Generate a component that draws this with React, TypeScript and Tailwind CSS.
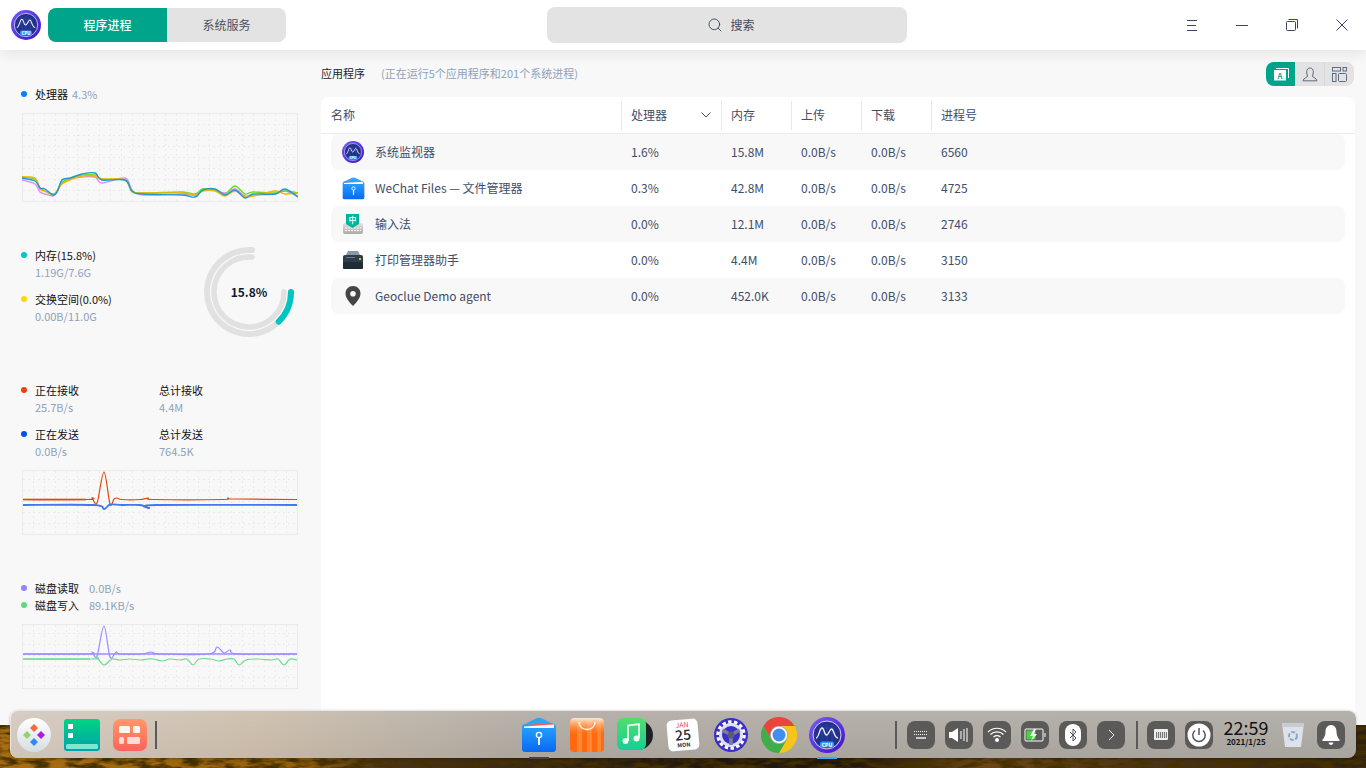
import { Search } from 'lucide-react';
import type { ReactNode } from 'react';

type Pt = [number, number];
type Line = { color: string; pts: Pt[]; width?: number };

const smooth = (pts: Pt[]) => {
  let d = `M${pts[0][0]} ${pts[0][1]}`;
  for (let i = 0; i < pts.length - 1; i++) {
    const p0 = pts[Math.max(i - 1, 0)];
    const p1 = pts[i];
    const p2 = pts[i + 1];
    const p3 = pts[Math.min(i + 2, pts.length - 1)];
    const c1x = p1[0] + (p2[0] - p0[0]) / 6;
    const c1y = p1[1] + (p2[1] - p0[1]) / 6;
    const c2x = p2[0] - (p3[0] - p1[0]) / 6;
    const c2y = p2[1] - (p3[1] - p1[1]) / 6;
    d += ` C${c1x} ${c1y} ${c2x} ${c2y} ${p2[0]} ${p2[1]}`;
  }
  return d;
};

const cpuX = [0, 13, 18, 23, 31, 35, 40, 48, 60, 73, 80, 103, 110, 121, 160, 173, 181, 193, 203, 213, 223, 231, 253, 263, 276];
const zip = (ys: number[]) => ys.map((y, i) => [cpuX[i], y] as Pt);

const cpuLines: Line[] = [
  { color: '#d98cf5', pts: zip([67, 71, 79, 81, 83, 79, 70, 66, 64, 64, 70, 65, 77, 82, 81, 82, 76, 77, 80, 76, 83, 82, 81, 78, 83]) },
  { color: '#72d920', pts: zip([64, 66, 75, 78, 81, 78, 69, 66, 62, 62, 66, 67, 78, 80, 79, 81, 76, 77, 81, 73, 81, 79, 80, 78, 80]) },
  { color: '#f5b400', pts: zip([64, 65, 76, 78, 82, 78, 71, 67, 63, 63, 66, 67, 79, 80, 80, 82, 78, 78, 83, 78, 84, 83, 78, 81, 80]) },
  { color: '#1a9bd8', pts: zip([65, 68, 75, 76, 82, 79, 67, 65, 61, 60, 67, 67, 78, 81, 82, 84, 77, 76, 82, 77, 85, 81, 81, 76, 84]) },
];

const netLines: Line[] = [
  { color: '#e88a60', pts: [[1, 29.5], [64, 29.5]], width: 2 },
  { color: '#e2470c', pts: [[1, 29.5], [66, 29.5], [70, 28], [75, 33], [82, 2], [88, 34], [92, 29], [95, 28], [100, 29.5], [118, 29.5], [126, 28], [132, 29.5], [200, 29.5], [206, 28], [212, 29], [275, 29.5]], width: 1.2 },
  { color: '#3f78f0', pts: [[1, 35], [72, 35], [82, 39], [88, 34.5], [100, 35], [118, 35], [127, 38], [134, 35], [275, 35]], width: 1.8 },
];

const diskLines: Line[] = [
  { color: '#b2a8ff', pts: [[1, 30], [275, 30]], width: 2 },
  { color: '#9a8cff', pts: [[1, 30], [66, 30], [70, 28], [75, 32], [82, 2], [88, 33], [94, 28], [98, 30], [120, 30], [129, 28], [138, 30], [187, 30], [195, 23], [202, 29], [208, 26], [216, 30], [275, 30]], width: 1.2 },
  { color: '#a3e6b2', pts: [[1, 35], [68, 35]], width: 2 },
  { color: '#6fdc8a', pts: [[1, 35], [70, 35], [75, 34], [82, 41], [90, 35], [98, 36], [108, 35], [118, 36], [126, 35], [132, 35], [140, 37], [148, 35], [158, 36], [165, 35], [171, 41], [177, 35], [188, 35], [197, 37], [205, 35], [212, 35], [217, 41], [224, 36], [236, 35], [250, 36], [256, 35], [262, 41], [268, 35], [275, 36]], width: 1.2 },
];

function Chart({ h, lines }: { h: number; lines: Line[] }) {
  const vs = Array.from({ length: 24 }, (_, i) => 11 * (i + 1));
  const hs = Array.from({ length: Math.floor(h / 11) }, (_, i) => h - 1 - 11 * (i + 1)).filter((y) => y > 2);
  return (
    <svg width="276" height={h} viewBox={`0 0 276 ${h}`} className="block">
      <rect x="0.5" y="0.5" width="275" height={h - 1} fill="#f8f8f8" stroke="#ebebeb" />
      {vs.map((x) => (
        <line key={x} x1={x + 0.5} x2={x + 0.5} y1="1" y2={h - 1} stroke="#ebebeb" strokeDasharray="2 3" />
      ))}
      {hs.map((y) => (
        <line key={y} x1="1" x2="275" y1={y + 0.5} y2={y + 0.5} stroke="#ebebeb" strokeDasharray="2 3" />
      ))}
      {lines.map((l, i) => (
        <path key={i} d={smooth(l.pts)} fill="none" stroke={l.color} strokeWidth={l.width ?? 1.4} strokeLinejoin="round" />
      ))}
    </svg>
  );
}

function Dot({ color }: { color: string }) {
  return <span className={`w-[6px] h-[6px] rounded-full shrink-0 ml-[-1px] mr-[8px] ${color}`} />;
}

function MemoryRing() {
  return (
    <div className="relative w-[90px] h-[90px] shrink-0">
      <svg width="90" height="90" viewBox="0 0 90 90" className="block">
        <path d="M48 3.1A42 42 0 1 0 74.7 74.7" fill="none" stroke="#e1e1e1" strokeWidth="6" strokeLinecap="round" />
        <path d="M48 10.1A35 35 0 1 0 80 45" fill="none" stroke="#e1e1e1" strokeWidth="5.5" strokeLinecap="round" />
        <path d="M87 45A42 42 0 0 1 74.7 74.7" fill="none" stroke="#00c5c0" strokeWidth="6" strokeLinecap="round" />
      </svg>
      <div className="absolute inset-0 flex items-center justify-center text-[12px] font-bold text-[#0b1a33]">15.8%</div>
    </div>
  );
}

function Sidebar() {
  const sub = 'text-[11px] text-[#8ea2ba] h-[17px] leading-[17px]';
  const label = 'text-[11px] text-[#111] h-[18px] leading-[18px] flex items-center';
  return (
    <div className="w-[321px] shrink-0 pl-[22px] pt-[35px] flex flex-col">
      <div className={label}>
        <Dot color="bg-[#0081ff]" />
        <span>处理器</span>
        <span className="ml-[4px] text-[#8ea2ba]">4.3%</span>
      </div>
      <div className="mt-[10px]">
        <Chart h={89} lines={cpuLines} />
      </div>

      <div className="mt-[45px] flex">
        <div className="w-[182px] -mt-[1px]">
          <div className={label}>
            <Dot color="bg-[#00c5c0]" />
            内存(15.8%)
          </div>
          <div className={`${sub} pl-[13px]`}>1.19G/7.6G</div>
          <div className={`${label} mt-[9px]`}>
            <Dot color="bg-[#fed900]" />
            交换空间(0.0%)
          </div>
          <div className={`${sub} pl-[13px]`}>0.00B/11.0G</div>
        </div>
        <MemoryRing />
      </div>

      <div className="mt-[44px] grid grid-cols-[137px_1fr] gap-y-[9px]">
        <div>
          <div className={label}>
            <Dot color="bg-[#e2470c]" />
            正在接收
          </div>
          <div className={`${sub} pl-[13px]`}>25.7B/s</div>
        </div>
        <div>
          <div className={label}>总计接收</div>
          <div className={sub}>4.4M</div>
        </div>
        <div>
          <div className={label}>
            <Dot color="bg-[#0050f0]" />
            正在发送
          </div>
          <div className={`${sub} pl-[13px]`}>0.0B/s</div>
        </div>
        <div>
          <div className={label}>总计发送</div>
          <div className={sub}>764.5K</div>
        </div>
      </div>
      <div className="mt-[10px]">
        <Chart h={65} lines={netLines} />
      </div>

      <div className="mt-[44px]">
        <div className={`${label} !h-[17px]`}>
          <Dot color="bg-[#8f85ff]" />
          <span className="w-[54px]">磁盘读取</span>
          <span className="text-[#8ea2ba]">0.0B/s</span>
        </div>
        <div className={`${label} !h-[17px]`}>
          <Dot color="bg-[#66d77f]" />
          <span className="w-[54px]">磁盘写入</span>
          <span className="text-[#8ea2ba]">89.1KB/s</span>
        </div>
      </div>
      <div className="mt-[11px]">
        <Chart h={65} lines={diskLines} />
      </div>
    </div>
  );
}

function MonitorIcon({ size, id }: { size: number; id: string }) {
  return (
    <svg width={size} height={size} viewBox="0 0 36 36" className="block">
      <defs>
        <linearGradient id={id} x1="0" y1="0" x2="1" y2="1">
          <stop offset="0" stopColor="#7b5cf8" />
          <stop offset="1" stopColor="#3a12c4" />
        </linearGradient>
      </defs>
      <circle cx="18" cy="18" r="18" fill={`url(#${id})`} />
      <circle cx="18" cy="18" r="14" fill="#22328c" stroke="#d5d0ff" strokeWidth="1" />
      <path d="M10 11H26M10 16H26M13 8V24M18 7V24M23 8V24" stroke="#3f50ae" strokeWidth="0.500" />
      <path d="M7 21C10 21 10.500 11 13 11C15.500 11 15 18 17.500 18C20 18 20.500 12 22.500 12C25 12 25 21 29 21" fill="none" stroke="#eef2ff" strokeWidth="1.300" />
      <rect x="11" y="24.500" width="14" height="6" rx="2" fill="#2f9df0" />
      <text x="18" y="29.500" textAnchor="middle" fontSize="5" fontWeight="700" fill="#fff">CPU</text>
    </svg>
  );
}

function FilesIcon({ size, id }: { size: number; id: string }) {
  return (
    <svg width={size} height={size} viewBox="0 0 36 36" className="block">
      <defs>
        <linearGradient id={id} x1="0" y1="0" x2="0" y2="1">
          <stop offset="0" stopColor="#27a6ff" />
          <stop offset="1" stopColor="#0a68f2" />
        </linearGradient>
      </defs>
      <path d="M2 8L15 1.500Q18 0 21 1.500L34 8Z" fill="#2aa8f8" />
      <rect x="1" y="7" width="34" height="28" rx="3" fill={`url(#${id})`} />
      <path d="M4 8L32 6V8.500H4Z" fill="#ff5a5f" />
      <path d="M3 9.500L33 7.500V11H3Z" fill="#fff" opacity="0.95" />
      <circle cx="18" cy="18" r="2.600" fill="none" stroke="#fff" strokeWidth="1.400" />
      <path d="M18 20.500V28" stroke="#fff" strokeWidth="1.800" />
    </svg>
  );
}

function InputIcon() {
  return (
    <svg width="22" height="22" viewBox="0 0 22 22" className="block">
      <defs>
        <linearGradient id="kb-bg" x1="0" y1="0" x2="0" y2="1">
          <stop offset="0" stopColor="#e4e4e2" />
          <stop offset="1" stopColor="#a9aba8" />
        </linearGradient>
      </defs>
      <rect x="1" y="10" width="20" height="11" rx="2" fill="url(#kb-bg)" />
      <path d="M3 15H19M3 17.500H19" stroke="#f8f8f8" strokeDasharray="2 1" />
      <path d="M4 1H17V11L10.500 15L4 11Z" fill="#00b39b" />
      <text x="10.500" y="10" textAnchor="middle" fontSize="8" fontWeight="700" fill="#d8fff6">中</text>
    </svg>
  );
}

function PrinterIcon() {
  return (
    <svg width="22" height="20" viewBox="0 0 22 20" className="block">
      <path d="M6 1H16L18 5H4Z" fill="#8c98a2" />
      <rect x="1" y="5" width="20" height="14" rx="2" fill="#2d3d4b" />
      <rect x="1" y="12" width="20" height="7" rx="1" fill="#1f2d38" />
      <rect x="4" y="7" width="9" height="1" fill="#6e7c88" />
      <rect x="17" y="8" width="2" height="2" fill="#f5a623" />
    </svg>
  );
}

function PinIcon() {
  return (
    <svg width="18" height="22" viewBox="0 0 18 22" className="block">
      <path fillRule="evenodd" d="M9 1C4.600 1 1.500 4.300 1.500 8.500C1.500 13 6 18 9 21C12 18 16.500 13 16.500 8.500C16.500 4.300 13.400 1 9 1ZM9 6A2.800 2.800 0 1 1 9 11.600A2.800 2.800 0 1 1 9 6Z" fill="#454545" />
    </svg>
  );
}

const rows = [
  { name: '系统监视器', icon: <MonitorIcon size={22} id="mon-row" />, cpu: '1.6%', mem: '15.8M', pid: '6560' },
  { name: 'WeChat Files — 文件管理器', icon: <FilesIcon size={23} id="files-row" />, cpu: '0.3%', mem: '42.8M', pid: '4725' },
  { name: '输入法', icon: <InputIcon />, cpu: '0.0%', mem: '12.1M', pid: '2746' },
  { name: '打印管理器助手', icon: <PrinterIcon />, cpu: '0.0%', mem: '4.4M', pid: '3150' },
  { name: 'Geoclue Demo agent', icon: <PinIcon />, cpu: '0.0%', mem: '452.0K', pid: '3133' },
];

function TitleBar() {
  return (
    <div className="relative z-10 h-[50px] shrink-0 bg-white flex items-center shadow-[0_3px_14px_rgba(0,0,0,0.09)]">
      <div className="ml-[11px]">
        <MonitorIcon size={30} id="mon-title" />
      </div>
      <div className="ml-[7px] w-[238px] h-[34px] rounded-lg overflow-hidden flex text-[12px]">
        <div className="w-[119px] bg-[#00a48a] text-white font-medium flex items-center justify-center">程序进程</div>
        <div className="flex-1 bg-[#e3e3e3] text-[#4a4f5f] flex items-center justify-center">系统服务</div>
      </div>
      <div className="ml-[261px] w-[360px] h-[36px] rounded-lg bg-[#e3e3e3] pl-[8px] flex items-center justify-center gap-[7px] text-[12px] text-[#3f4757]">
        <Search size={16} strokeWidth={1.4} />
        搜索
      </div>
      <div className="ml-auto mr-[-1px] flex items-center text-[#3c4660]">
        <div className="w-[50px] h-[50px] flex items-center justify-center">
          <svg width="12" height="11" viewBox="0 0 12 11" fill="none" stroke="currentColor">
            <path d="M1 .5H11M1 5.500H10M1 10.500H11" />
          </svg>
        </div>
        <div className="w-[50px] h-[50px] flex items-center justify-center">
          <svg width="12" height="3" viewBox="0 0 12 3" fill="none" stroke="currentColor">
            <path d="M0 1.500H12" />
          </svg>
        </div>
        <div className="w-[50px] h-[50px] flex items-center justify-center">
          <svg width="12" height="12" viewBox="0 0 12 12" fill="none" stroke="currentColor">
            <rect x=".5" y="2.500" width="9" height="9" rx="1" />
            <path d="M2.500 .5H11.500V9.500" />
          </svg>
        </div>
        <div className="w-[50px] h-[50px] flex items-center justify-center">
          <svg width="12" height="12" viewBox="0 0 12 12" fill="none" stroke="currentColor">
            <path d="M.5 .5L11.500 11.500M11.500 .5L.5 11.500" />
          </svg>
        </div>
      </div>
    </div>
  );
}

function ViewToggle() {
  return (
    <div className="flex h-[24px] w-[88px] mr-[1px] rounded-lg overflow-hidden text-[#5d6a80]">
      <div className="w-[29px] bg-[#00a48a] flex items-center justify-center">
        <svg width="16" height="14" viewBox="0 0 16 14">
          <path d="M3 1.500H15.500V11" fill="none" stroke="#fff" />
          <rect x="1" y="3" width="12" height="10.500" fill="#fff" />
          <text x="7" y="12" textAnchor="middle" fontSize="7.500" fontWeight="700" fill="#00a48a">A</text>
        </svg>
      </div>
      <div className="w-[30px] bg-[#e3e3e3] border-r border-[#d9d9d9] flex items-center justify-center">
        <svg width="16" height="15" viewBox="0 0 16 15" fill="none" stroke="currentColor">
          <path d="M5.500 9C5 7.500 4.700 6.500 4.700 4.800C4.700 2.500 6 1 8 1C10 1 11.300 2.500 11.300 4.800C11.300 6.500 11 7.500 10.500 9C10.200 10.500 15 11 15 13.800H1C1 11 5.800 10.500 5.500 9Z" />
        </svg>
      </div>
      <div className="flex-1 bg-[#e3e3e3] flex items-center justify-center">
        <svg width="15" height="15" viewBox="0 0 15 15" fill="none" stroke="currentColor">
          <rect x=".5" y=".5" width="8" height="3.500" />
          <rect x="11" y=".5" width="3.500" height="3.500" />
          <rect x=".5" y="6.500" width="3.500" height="8" />
          <rect x="6.500" y="6.500" width="8" height="8" rx="1" />
        </svg>
      </div>
    </div>
  );
}

function ProcessTable() {
  return (
    <div className="flex-1 bg-white rounded-t-lg text-[12px] text-[#414d68]">
      <div className="h-[37px] border-b border-[#ececec] flex items-center">
        <div className="w-[300px] pl-[10px]">名称</div>
        <div className="w-[100px] h-[29px] border-l border-[#e8e8e8] pl-[9px] pr-[10px] flex items-center justify-between">
          处理器
          <svg width="10" height="6" viewBox="0 0 10 6" fill="none" stroke="currentColor">
            <path d="M.5 .5L5 5L9.500 .5" />
          </svg>
        </div>
        <div className="w-[70px] h-[29px] border-l border-[#e8e8e8] pl-[9px] flex items-center">内存</div>
        <div className="w-[70px] h-[29px] border-l border-[#e8e8e8] pl-[9px] flex items-center">上传</div>
        <div className="w-[70px] h-[29px] border-l border-[#e8e8e8] pl-[9px] flex items-center">下载</div>
        <div className="w-[70px] h-[29px] border-l border-[#e8e8e8] pl-[9px] flex items-center">进程号</div>
      </div>
      <div className="px-[10px]">
        {rows.map((r, i) => (
          <div key={r.pid} className={`h-[36px] rounded-lg flex items-center ${i % 2 === 0 ? 'bg-[#f8f8f8]' : ''}`}>
            <div className="w-[300px] flex items-center">
              <div className="w-[44px] flex justify-center">{r.icon}</div>
              {r.name}
            </div>
            <div className="w-[100px]">{r.cpu}</div>
            <div className="w-[70px]">{r.mem}</div>
            <div className="w-[70px]">0.0B/s</div>
            <div className="w-[70px]">0.0B/s</div>
            <div>{r.pid}</div>
          </div>
        ))}
      </div>
    </div>
  );
}

function Launcher() {
  return (
    <svg width="34" height="34" viewBox="0 0 34 34" className="block">
      <defs>
        <linearGradient id="launcher-bg" x1="0" y1="0" x2="0" y2="1">
          <stop offset="0" stopColor="#ffffff" />
          <stop offset="1" stopColor="#d6dde2" />
        </linearGradient>
      </defs>
      <circle cx="17" cy="17" r="17" fill="url(#launcher-bg)" />
      <path d="M17 6L21 10L17 14L13 10Z" fill="#f8683c" />
      <path d="M24 13L28 17L24 21L20 17Z" fill="#b01ae0" />
      <path d="M17 20L21 24L17 28L13 24Z" fill="#2b8cf5" />
      <path d="M10 13L14 17L10 21L6 17Z" fill="#90d56a" />
    </svg>
  );
}

function TerminalApp() {
  return (
    <svg width="36" height="32" viewBox="0 0 36 32" className="block">
      <defs>
        <linearGradient id="term-bg" x1="0" y1="0" x2="0" y2="1">
          <stop offset="0" stopColor="#00d480" />
          <stop offset="1" stopColor="#00a0b0" />
        </linearGradient>
      </defs>
      <rect width="36" height="32" rx="3" fill="url(#term-bg)" />
      <rect x="4" y="5" width="5" height="5" fill="#fff" />
      <rect x="4" y="14" width="5" height="5" fill="#fff" />
      <rect x="2" y="25" width="32" height="5" rx="1.500" fill="#7ce8cc" />
    </svg>
  );
}

function TilesApp() {
  return (
    <svg width="34" height="32" viewBox="0 0 34 32" className="block">
      <defs>
        <linearGradient id="tiles-bg" x1="0" y1="0" x2="0" y2="1">
          <stop offset="0" stopColor="#ff9a6c" />
          <stop offset="1" stopColor="#ff625c" />
        </linearGradient>
      </defs>
      <rect width="34" height="32" rx="7" fill="url(#tiles-bg)" />
      <rect x="6" y="7" width="11" height="7" rx="1.500" fill="#fff" fillOpacity="0.9" />
      <rect x="20" y="7" width="7" height="7" rx="1.500" fill="#fff" fillOpacity="0.9" />
      <rect x="6" y="18" width="5" height="7" rx="1.500" fill="#fff" fillOpacity="0.75" />
      <rect x="14" y="18" width="13" height="7" rx="1.500" fill="#fff" fillOpacity="0.75" />
    </svg>
  );
}

function StoreIcon() {
  return (
    <svg width="36" height="36" viewBox="0 0 36 36" className="block">
      <defs>
        <linearGradient id="store-top" x1="0" y1="0" x2="0" y2="1">
          <stop offset="0" stopColor="#f8ead8" />
          <stop offset="1" stopColor="#ff8a34" stopOpacity="0" />
        </linearGradient>
      </defs>
      <rect x="1" y="1" width="34" height="34" rx="4" fill="#ff6a10" />
      <path d="M8 1H13V35H8ZM18 1H23V35H18ZM28 1H32V35H28Z" fill="#ff8630" />
      <rect x="1" y="1" width="34" height="17" rx="4" fill="url(#store-top)" />
      <path d="M10 5C10 15 26 15 26 5" fill="none" stroke="#fff" strokeWidth="1.300" />
    </svg>
  );
}

function MusicIcon() {
  return (
    <svg width="36" height="36" viewBox="0 0 36 36" className="block">
      <defs>
        <linearGradient id="music-bg" x1="0" y1="0" x2="0" y2="1">
          <stop offset="0" stopColor="#54dc6c" />
          <stop offset="1" stopColor="#10d096" />
        </linearGradient>
      </defs>
      <circle cx="21" cy="18" r="15" fill="#1c2226" />
      <rect x="0" y="1" width="29" height="32" rx="6" fill="url(#music-bg)" />
      <path d="M11 24V8.500L22 7V21" fill="none" stroke="#e8fff4" strokeWidth="1.800" />
      <circle cx="8.500" cy="24" r="3" fill="#e8fff4" />
      <circle cx="19.500" cy="21.500" r="3" fill="#e8fff4" />
    </svg>
  );
}

function CalendarIcon() {
  return (
    <svg width="34" height="34" viewBox="0 0 34 34" className="block">
      <g transform="rotate(-5 17 17)">
        <rect x="1.500" y="1.500" width="31" height="31" rx="5" fill="#a9a7a3" transform="translate(1 1)" />
        <rect x="1.500" y="1.500" width="31" height="31" rx="5" fill="#fff" />
        <text x="17" y="9.500" textAnchor="middle" fontSize="7" fill="#e5484d">JAN</text>
        <text x="17" y="22" textAnchor="middle" fontSize="14" fontWeight="500" fill="#1f2a3c">25</text>
        <text x="17" y="29" textAnchor="middle" fontSize="5.500" fontWeight="700" fill="#1f2a3c">MON</text>
      </g>
    </svg>
  );
}

function SettingsIcon() {
  return (
    <svg width="34" height="34" viewBox="0 0 34 34" className="block">
      <circle cx="17" cy="17" r="17" fill="#3a30c8" />
      <circle cx="17" cy="17" r="13" fill="none" stroke="#fff" strokeWidth="3.500" strokeDasharray="3.400 2.400" />
      <circle cx="17" cy="17" r="10.500" fill="none" stroke="#dfe0f0" strokeWidth="3" />
      <path d="M17 17V27M17 17L8.500 12M17 17L25.500 12" stroke="#7d7d98" strokeWidth="3.500" />
      <circle cx="17" cy="17" r="3.500" fill="#5a5a78" />
    </svg>
  );
}

function ChromeIcon() {
  return (
    <svg width="36" height="36" viewBox="0 0 36 36" className="block">
      <path d="M2.400 9A18 18 0 0 1 33.600 9H18A9 9 0 0 0 10.200 22.500Z" fill="#e8453c" />
      <path d="M33.600 9A18 18 0 0 1 18 36L25.800 22.500A9 9 0 0 0 18 9Z" fill="#f5c518" />
      <path d="M18 36A18 18 0 0 1 2.400 9L10.200 22.500A9 9 0 0 0 25.800 22.500Z" fill="#3fae4a" />
      <circle cx="18" cy="18" r="8.200" fill="#fff" />
      <circle cx="18" cy="18" r="6.500" fill="#3f8ef0" />
    </svg>
  );
}

function TrayTile({ children }: { children: ReactNode }) {
  return <div className="w-[28px] h-[28px] rounded-lg bg-[#5b5a58] flex items-center justify-center text-white shrink-0">{children}</div>;
}

function Dock() {
  return (
    <div className="absolute left-[10px] top-[710px] w-[1346px] h-[48px] rounded-lg border-t border-l border-[#e6e6e6] bg-[linear-gradient(180deg,rgba(255,255,255,0.14),rgba(255,255,255,0)),linear-gradient(90deg,#cfc5ba_0%,#c8b9a6_18%,#aba59d_38%,#a8a49e_100%)] flex items-center pl-[6px] shadow-[0_1px_3px_rgba(0,0,0,0.25)]">
      <Launcher />
      <div className="ml-[13px]">
        <TerminalApp />
      </div>
      <div className="ml-[13px]">
        <TilesApp />
      </div>
      <div className="ml-[8px] w-[2px] h-[28px] bg-[#5a5a5a]" />

      <div className="ml-[364px] flex items-center gap-[12px]">
        <div className="relative w-[36px]">
          <FilesIcon size={36} id="files-dock" />
          <div className="absolute left-[8px] bottom-[-6px] w-[20px] h-[2px] bg-[#444]" />
        </div>
        <div className="w-[36px]">
          <StoreIcon />
        </div>
        <div className="w-[36px]">
          <MusicIcon />
        </div>
        <div className="w-[36px] flex justify-center">
          <CalendarIcon />
        </div>
        <div className="w-[36px] flex justify-center">
          <SettingsIcon />
        </div>
        <div className="w-[36px]">
          <ChromeIcon />
        </div>
        <div className="relative w-[36px]">
          <MonitorIcon size={36} id="mon-dock" />
          <div className="absolute left-[8px] bottom-[-6px] w-[20px] h-[2px] bg-[#3ca8f0]" />
        </div>
      </div>

      <div className="ml-[50px] w-[2px] h-[28px] bg-[#5a5a5a]" />
      <div className="ml-[10px] flex items-center gap-[10px]">
        <TrayTile>
          <svg width="16" height="10" viewBox="0 0 16 10" fill="none" stroke="#eee">
            <path d="M1 1.500H15M1 4.500H15" strokeDasharray="1 1" />
            <path d="M3 8H13" strokeWidth="1.500" />
          </svg>
        </TrayTile>
        <TrayTile>
          <svg width="20" height="16" viewBox="0 0 20 16" fill="none">
            <path d="M0 5H3L9 1V15L3 11H0Z" fill="#fff" />
            <path d="M12 4V12M15 2V14M18 1V15" stroke="#fff" />
          </svg>
        </TrayTile>
        <TrayTile>
          <svg width="20" height="15" viewBox="0 0 20 15" fill="none" stroke="#fff">
            <path d="M1 5C6 0 14 0 19 5M3.500 7.500C7 4 13 4 16.500 7.500M6.500 10C8.500 8.500 11.500 8.500 13.500 10" strokeWidth="1.200" />
            <circle cx="10" cy="13" r="2" fill="#fff" stroke="none" />
          </svg>
        </TrayTile>
        <TrayTile>
          <svg width="22" height="14" viewBox="0 0 22 14" fill="none">
            <path d="M2 1H18A1 1 0 0 1 19 2V12A1 1 0 0 1 18 13H2A1 1 0 0 1 1 12V2A1 1 0 0 1 2 1Z" stroke="#fff" />
            <path d="M21 5V9" stroke="#fff" />
            <rect x="2.500" y="2.500" width="9" height="9" fill="#3fd83f" />
            <path d="M10 1L6 8H9L7 13L13 6H10L12 1Z" fill="#fff" />
          </svg>
        </TrayTile>
        <TrayTile>
          <div className="w-[16px] h-[22px] rounded-full bg-white flex items-center justify-center">
            <svg width="8" height="14" viewBox="0 0 8 14" fill="none" stroke="#555">
              <path d="M1 4L7 10L4 13V1L7 4L1 10" />
            </svg>
          </div>
        </TrayTile>
        <TrayTile>
          <svg width="7" height="12" viewBox="0 0 7 12" fill="none" stroke="#f0f0f0">
            <path d="M1 1L6 6L1 11" />
          </svg>
        </TrayTile>
      </div>
      <div className="ml-[11px] w-[2px] h-[28px] bg-[#5a5a5a]" />
      <div className="ml-[9px] flex items-center gap-[10px]">
        <TrayTile>
          <div className="w-[14px] h-[11px] rounded-[1px] bg-[#eee] flex items-center justify-center">
            <div className="w-[11px] h-[6px] bg-[repeating-linear-gradient(90deg,#777_0,#777_1px,#ddd_1px,#ddd_2px)]" />
          </div>
        </TrayTile>
        <TrayTile>
          <svg width="24" height="24" viewBox="0 0 24 24" fill="none">
            <circle cx="12" cy="12" r="11.500" fill="#fff" />
            <path d="M8 7.500A6.200 6.200 0 1 0 16 7.500" stroke="#555" strokeWidth="1.500" />
            <path d="M12 5V12" stroke="#555" strokeWidth="1.500" />
          </svg>
        </TrayTile>
      </div>
      <div className="ml-[11px] mb-[6px] w-[44px] flex flex-col items-center text-[#111] leading-none">
        <span className="text-[18px] leading-[20px]">22:59</span>
        <span className="text-[8px] font-bold leading-[10px]">2021/1/25</span>
      </div>
      <div className="ml-[14px] w-[22px]">
        <svg width="22" height="26" viewBox="0 0 22 26" className="block">
          <path d="M0 1H22L19 25H3Z" fill="#dde2ea" />
          <path d="M0 1H22L21.500 5H.5Z" fill="#c7ccd4" />
          <circle cx="11" cy="14" r="4" fill="none" stroke="#8ea6c8" strokeWidth="2" strokeDasharray="4 1.500" />
        </svg>
      </div>
      <div className="ml-[13px]">
        <TrayTile>
          <svg width="18" height="20" viewBox="0 0 18 20" fill="#fff">
            <path d="M9 0C5.500 0 3.500 3 3.500 6.500C3.500 10 2.500 12.500 0.500 14.500V16H17.500V14.500C15.500 12.500 14.500 10 14.500 6.500C14.500 3 12.500 0 9 0Z" />
            <path d="M6.500 17.500C7 19.200 8 20 9 20C10 20 11 19.200 11.500 17.500Z" />
          </svg>
        </TrayTile>
      </div>
    </div>
  );
}

function Wallpaper() {
  return (
    <div className="relative flex-1 overflow-hidden bg-[linear-gradient(90deg,#a86e12_0%,#94600f_22%,#4a3418_28%,#241a10_50%,#1f160e_62%,#6a4616_72%,#4a3218_85%,#2f2112_100%)]">
      <svg width="1366" height="43" className="absolute inset-0 block">
        <filter id="wall-noise">
          <feTurbulence type="fractalNoise" baseFrequency="0.06 0.2" numOctaves="3" seed="4" />
          <feColorMatrix values="0 0 0 0 0.06  0 0 0 0 0.03  0 0 0 0 0  3 0 0 0 -1.100" />
        </filter>
        <rect width="1366" height="43" filter="url(#wall-noise)" />
      </svg>
    </div>
  );
}

export default function App() {
  return (
    <div className="relative w-[1366px] h-[768px] overflow-hidden flex flex-col font-['Noto_Sans_CJK_SC',sans-serif]">
      <div className="h-[725px] shrink-0 flex flex-col bg-[#f8f8f8]">
        <TitleBar />
        <div className="flex-1 flex min-h-0">
          <Sidebar />
          <div className="flex-1 flex flex-col pr-[11px] pt-[12px]">
            <div className="h-[24px] flex items-center justify-between mb-[11px] text-[11px]">
              <div className="flex items-center mb-[2px]">
                <span className="text-[#1d2433]">应用程序</span>
                <span className="ml-[16px] text-[#8ea2ba]">(正在运行5个应用程序和201个系统进程)</span>
              </div>
              <ViewToggle />
            </div>
            <ProcessTable />
          </div>
        </div>
      </div>
      <Wallpaper />
      <Dock />
    </div>
  );
}
